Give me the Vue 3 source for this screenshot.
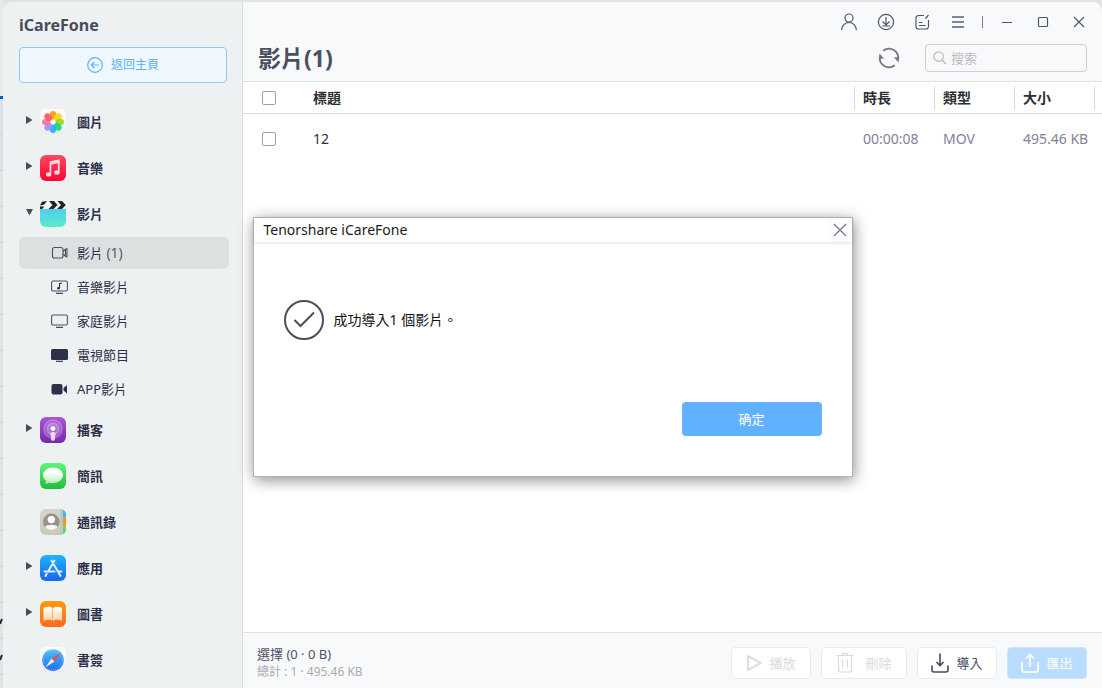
<script setup>
import { ref } from 'vue'

const groups = [
  { id: 'photos', label: '圖片', arrow: 'right' },
  { id: 'music', label: '音樂', arrow: 'right' },
  {
    id: 'videos',
    label: '影片',
    arrow: 'down',
    children: [
      { id: 'video', label: '影片', count: '(1)', active: true },
      { id: 'mv', label: '音樂影片' },
      { id: 'home', label: '家庭影片' },
      { id: 'tv', label: '電視節目' },
      { id: 'app', label: 'APP影片' }
    ]
  },
  { id: 'podcasts', label: '播客', arrow: 'right' },
  { id: 'messages', label: '簡訊' },
  { id: 'contacts', label: '通訊錄' },
  { id: 'apps', label: '應用', arrow: 'right' },
  { id: 'books', label: '圖書', arrow: 'right' },
  { id: 'bookmarks', label: '書簽' }
]

const petals = [
  ['#ff9a05', 0], ['#ffd20a', 45], ['#9ed60f', 90], ['#10d884', 135],
  ['#1db2f6', 180], ['#a08cff', 225], ['#ff70a4', 270], ['#ff5850', 315]
]

const rows = ref([{ title: '12', duration: '00:00:08', type: 'MOV', size: '495.46 KB', checked: false }])
const allChecked = ref(false)
const query = ref('')
const dialogOpen = ref(true)
</script>

<template>
  <div class="desktop">
    <svg class="behind" width="3" height="688" aria-hidden="true">
      <rect width="3" height="96" fill="#e9eaec" />
      <rect y="96" width="3" height="3" fill="#1559c7" />
      <rect y="99" width="3" height="72" fill="#dcdfe8" />
      <path d="M0 134.500h3M0 170.500h3M0 206.500h3M0 242.500h3M0 278.500h3M0 314.500h3M0 350.500h3M0 386.500h3M0 422.500h3M0 458.500h3M0 494.500h3M0 530.500h3M0 566.500h3M0 602.500h3M0 638.500h3M0 674.500h3" stroke="#cfcfd1" />
      <path d="M0 624l2-5M0 660l2-5" stroke="#1d2742" stroke-width="2" />
    </svg>
    <div class="window">
      <aside class="sidebar">
        <div class="brand">iCareFone</div>
        <button class="back" type="button">
          <svg width="16" height="16" viewBox="0 0 16 16" fill="none" stroke="currentColor" stroke-width="1.200">
            <circle cx="8" cy="8" r="7.300" />
            <path d="M12 8H4.500M7.300 5L4.300 8l3 3" />
          </svg>
          返回主頁
        </button>
        <nav>
          <ul class="groups">
            <li v-for="g in groups" :key="g.id">
              <button class="group" type="button">
                <svg class="arrow" width="7" height="8" viewBox="0 0 7 8" aria-hidden="true">
                  <path v-if="g.arrow === 'right'" d="M0 0L6.500 4 0 8z" fill="#4b4d5e" />
                  <path v-if="g.arrow === 'down'" d="M0 1h7L3.500 7.500z" fill="#4b4d5e" />
                </svg>
                <svg class="tile" width="26" height="26" viewBox="0 0 26 26" aria-hidden="true">
                  <defs>
                    <linearGradient :id="'g-' + g.id" x1="0" y1="0" x2="0" y2="1">
                      <template v-if="g.id === 'music'"><stop offset="0" stop-color="#fd4863" /><stop offset="1" stop-color="#fb0632" /></template>
                      <template v-else-if="g.id === 'videos'"><stop offset="0" stop-color="#4fcdf0" /><stop offset="1" stop-color="#58edc8" /></template>
                      <template v-else-if="g.id === 'podcasts'"><stop offset="0" stop-color="#ab55d8" /><stop offset="1" stop-color="#7529ab" /></template>
                      <template v-else-if="g.id === 'messages'"><stop offset="0" stop-color="#5df575" /><stop offset="1" stop-color="#22bd3c" /></template>
                      <template v-else-if="g.id === 'contacts'"><stop offset="0" stop-color="#d7d5ca" /><stop offset="1" stop-color="#c9c8ba" /></template>
                      <template v-else-if="g.id === 'apps'"><stop offset="0" stop-color="#1fb6fb" /><stop offset="1" stop-color="#1c63ee" /></template>
                      <template v-else-if="g.id === 'books'"><stop offset="0" stop-color="#ff9b08" /><stop offset="1" stop-color="#fb6a20" /></template>
                      <template v-else><stop offset="0" stop-color="#ffffff" /><stop offset="1" stop-color="#ececee" /></template>
                    </linearGradient>
                    <linearGradient v-if="g.id === 'messages'" id="bubble" x1="0" y1="0" x2="0" y2="1"><stop offset="0.300" stop-color="#fff" /><stop offset="1" stop-color="#b4ecbb" /></linearGradient>
                    <linearGradient v-if="g.id === 'books'" id="page" x1="0" y1="0" x2="0" y2="1"><stop offset="0" stop-color="#fff" /><stop offset="1" stop-color="#ffd0a8" /></linearGradient>
                    <linearGradient v-if="g.id === 'bookmarks'" id="dial" x1="0" y1="0" x2="0" y2="1"><stop offset="0" stop-color="#4cc3f7" /><stop offset="1" stop-color="#1e6bf2" /></linearGradient>
                  </defs>
                  <path v-if="g.id === 'videos'" d="M0 8h26v12a6 6 0 0 1-6 6H6a6 6 0 0 1-6-6z" fill="url(#g-videos)" />
                  <rect v-else width="26" height="26" rx="6" :fill="`url(#g-${g.id})`" />

                  <g v-if="g.id === 'photos'">
                    <ellipse v-for="p in petals" :key="p[1]" cx="13" cy="6.200" rx="3.300" ry="4.200" :fill="p[0]" fill-opacity="0.920" :transform="`rotate(${p[1]} 13 13)`" />
                    <circle cx="13" cy="13" r="1.900" fill="#fff" fill-opacity="0.850" />
                  </g>
                  <g v-else-if="g.id === 'music'" fill="#ffd9df">
                    <path d="M9.600 6.500l10-2.300v3.600l-8.300 1.900v9.500H9.600z" />
                    <path d="M17.900 6h1.700v11.500h-1.700z" />
                    <ellipse cx="8.600" cy="19.400" rx="2.700" ry="2.200" />
                    <ellipse cx="16.900" cy="17.400" rx="2.700" ry="2.200" />
                  </g>
                  <g v-else-if="g.id === 'videos'">
                    <path d="M0.500 3L3 .3h20l3 2.700v5H0z" fill="#f3f3f2" />
                    <path d="M0 4.500L2 .8l5-.8-3 3.700zM9 0h5l3.500 4-4 4H8.500l4-4zM17.500 0h4.500l3.800 4-3.800 4h-5l4-4zM0 5.500h4.500L2 8H0z" fill="#202225" />
                  </g>
                  <g v-else-if="g.id === 'podcasts'" fill="none" stroke="#e4bdf8">
                    <circle cx="13" cy="12" r="9" stroke-width="1.600" stroke-opacity="0.350" fill="#fff" fill-opacity="0.140" />
                    <circle cx="13" cy="12" r="5.800" stroke-width="1.600" stroke-opacity="0.400" fill="#fff" fill-opacity="0.180" />
                    <circle cx="13" cy="11.600" r="2.400" fill="#fff" stroke="none" />
                    <path d="M10.400 16.500c0-2 5.200-2 5.200 0l-.8 6c-.3 1.700-3.300 1.700-3.600 0z" fill="#eed6fa" stroke="none" />
                  </g>
                  <path v-else-if="g.id === 'messages'" d="M13 4.500c5.600 0 10 3.400 10 7.800S18.600 20 13 20c-1.400 0-2.700-.2-3.800-.6-1.200.9-2.600 1.300-4.200 1.200.8-.8 1.200-1.600 1.300-2.700C4.200 16.500 3 14.500 3 12.300 3 7.900 7.400 4.500 13 4.500z" fill="url(#bubble)" />
                  <g v-else-if="g.id === 'contacts'">
                    <path d="M20 0a6 6 0 0 1 3 .8v24.400a6 6 0 0 1-3 .8z" fill="#bcc9c0" />
                    <path d="M23 .8a6 6 0 0 1 3 5.200v2.500h-3z" fill="#38b6f7" />
                    <path d="M23 8.500h3v8.500h-3z" fill="#ff9318" />
                    <path d="M23 17.500h3V20a6 6 0 0 1-3 5.200z" fill="#5cd865" />
                    <circle cx="11.300" cy="12.800" r="8.300" fill="#979388" />
                    <circle cx="11.300" cy="10.600" r="3.700" fill="#fff" />
                    <path d="M5 18c1.300-3 11.300-3 12.600 0-2.600 4-10 4-12.600 0z" fill="#f6f6f2" />
                  </g>
                  <g v-else-if="g.id === 'apps'" stroke="#dcefff" stroke-width="2" stroke-linecap="round" fill="none">
                    <path d="M14.500 5.500l-6.300 10.800M6.700 18.800L5.500 21M11.500 5.500L20.500 21M4.500 16.500h10M18.500 16.500h3" />
                  </g>
                  <g v-else-if="g.id === 'books'" fill="url(#page)">
                    <path d="M3.500 7c3-1.700 7-1.600 9 .2V20c-2-1.500-6-1.600-9 0zM13 7.200c2-1.800 6-1.900 9-.2v13c-3-1.600-7-1.500-9 0z" />
                  </g>
                  <g v-else-if="g.id === 'bookmarks'">
                    <circle cx="13" cy="13" r="10.800" fill="url(#dial)" />
                    <circle cx="13" cy="13" r="9.500" fill="none" stroke="#b9e2ff" stroke-width="0.800" stroke-dasharray="0.600 1.400" />
                    <path d="M20.500 5.800L11.600 11.600l2.800 2.800z" fill="#f5453c" />
                    <path d="M5.500 20.300l6.100-8.700 2.800 2.800z" fill="#f3f6fa" />
                  </g>
                </svg>
                <span>{{ g.label }}</span>
              </button>
              <ul v-if="g.children" class="subs">
                <li v-for="c in g.children" :key="c.id">
                  <button class="sub" :class="{ active: c.active }" type="button">
                    <svg width="17" height="14" viewBox="0 0 17 14" fill="none" stroke="#4c5064" stroke-width="1.100" aria-hidden="true">
                      <template v-if="c.id === 'video'">
                        <rect x="1.500" y="1.500" width="10.500" height="10.500" rx="2" />
                        <path d="M12 5.500l3-2.800h1v8.100h-1l-3-2.800M14.500 3v7.500" />
                      </template>
                      <template v-else-if="c.id === 'mv'">
                        <rect x="0.600" y="1" width="15.800" height="10" rx="1.500" />
                        <path d="M5 13.300h7" stroke="#2c3048" />
                        <path d="M8.500 8V3.500l2.500-.3" stroke="#2c3048" />
                        <circle cx="7.500" cy="8.200" r="1.300" fill="#2c3048" stroke="none" />
                      </template>
                      <template v-else-if="c.id === 'home'">
                        <rect x="0.600" y="1" width="15.800" height="10" rx="1.500" />
                        <path d="M5 13.300h7" stroke="#2c3048" />
                      </template>
                      <template v-else-if="c.id === 'tv'">
                        <rect y="1" width="17" height="11" rx="1.500" fill="#2c3048" stroke="none" />
                        <path d="M5 13.300h7" stroke="#2c3048" />
                      </template>
                      <g v-else fill="#2c3048" stroke="none">
                        <rect x="0.500" y="2" width="11" height="10.500" rx="2" />
                        <path d="M12.500 6L16 3v8.500l-3.500-3z" />
                      </g>
                    </svg>
                    <span>{{ c.label }} <span v-if="c.count" class="count">{{ c.count }}</span></span>
                  </button>
                </li>
              </ul>
            </li>
          </ul>
        </nav>
      </aside>

      <main class="main">
        <header class="header">
          <div class="controls">
            <button type="button" aria-label="帳戶">
              <svg width="18" height="18" viewBox="0 0 18 18"><circle cx="8" cy="5" r="4" /><path d="M.6 17c.3-4.500 3.400-7.500 7.400-7.500s7.100 3 7.400 7.500" /></svg>
            </button>
            <button type="button" aria-label="下載">
              <svg width="18" height="18" viewBox="0 0 18 18"><circle cx="9" cy="9" r="7.600" /><path d="M9 4v7.500M5.500 8.500L9 12l3.500-3.500M5 13h8" /></svg>
            </button>
            <button type="button" aria-label="回饋">
              <svg width="18" height="18" viewBox="0 0 18 18"><path d="M11 2.500H5.500A2.500 2.500 0 0 0 3 5v8.500A2.500 2.500 0 0 0 5.500 16h7.500a2.500 2.500 0 0 0 2.500-2.500V7M12.500 5.500l3-3.500M6 9.500h3.500M6 12.500h6.500" /></svg>
            </button>
            <button type="button" aria-label="選單">
              <svg width="18" height="18" viewBox="0 0 18 18"><path d="M3 4h12M3 9h12M3 14h12" class="thick" /></svg>
            </button>
            <span class="bar"></span>
            <button type="button" aria-label="最小化">
              <svg width="18" height="18" viewBox="0 0 18 18"><path d="M4 9.500h10" /></svg>
            </button>
            <button type="button" aria-label="最大化">
              <svg width="18" height="18" viewBox="0 0 18 18"><rect x="4.500" y="4.500" width="9" height="9" rx="1" /></svg>
            </button>
            <button type="button" aria-label="關閉">
              <svg width="18" height="18" viewBox="0 0 18 18"><path d="M4 4l10 10M14 4L4 14" /></svg>
            </button>
          </div>
          <div class="heading">
            <h1>影片(1)</h1>
            <button class="refresh" type="button" aria-label="重新整理">
              <svg width="22" height="22" viewBox="0 0 22 22" fill="none" stroke="#767883" stroke-width="1.900">
                <path d="M5.200 3.800A9.200 9.200 0 0 1 20.200 11.500M16.800 18.200A9.200 9.200 0 0 1 1.800 10.500" />
                <path d="M16 10.500l5.200-.3-.7 5.300zM6 11.500l-5.200.3.700-5.300z" fill="#767883" stroke="none" />
              </svg>
            </button>
            <label class="search">
              <svg width="14" height="14" viewBox="0 0 14 14" fill="none" stroke="#b9bbbe" stroke-width="1.200" aria-hidden="true"><circle cx="5.600" cy="5.600" r="4.700" /><path d="M9 9l4 4" stroke-width="1.700" /></svg>
              <input v-model="query" type="text" placeholder="搜索" aria-label="搜索" />
            </label>
          </div>
        </header>

        <section class="content">
          <table>
            <colgroup><col class="c-check" /><col /><col class="c-data" /><col class="c-data" /><col class="c-data" /><col class="c-end" /></colgroup>
            <thead>
              <tr>
                <th class="check"><input v-model="allChecked" type="checkbox" aria-label="全選" /></th>
                <th>標題</th>
                <th class="tick">時長</th>
                <th class="tick">類型</th>
                <th class="tick">大小</th>
                <th class="tick"></th>
              </tr>
            </thead>
            <tbody>
              <tr v-for="r in rows" :key="r.title">
                <td class="check"><input v-model="r.checked" type="checkbox" aria-label="選擇 12" /></td>
                <td class="name">{{ r.title }}</td>
                <td class="data">{{ r.duration }}</td>
                <td class="data">{{ r.type }}</td>
                <td class="data">{{ r.size }}</td>
                <td></td>
              </tr>
            </tbody>
          </table>
        </section>

        <footer class="footer">
          <div class="summary">
            <div class="selected">選擇 (0 · 0 B)</div>
            <div class="total">總計 : 1 · 495.46 KB</div>
          </div>
          <button class="act off" type="button" disabled>
            <svg width="16" height="18" viewBox="0 0 16 18"><path d="M2 2l12.500 7L2 16z" stroke-width="1.800" /></svg>
            播放
          </button>
          <button class="act wide off" type="button" disabled>
            <svg width="18" height="20" viewBox="0 0 18 20"><path d="M.5 2.500h17M6.500 2V.700h5V2M2.500 2.500v14.500a2 2 0 0 0 2 2h9a2 2 0 0 0 2-2V2.500M6.500 6.500v8M11.500 6.500v8" stroke-width="1.200" /></svg>
            刪除
          </button>
          <button class="act" type="button">
            <svg width="18" height="20" viewBox="0 0 18 20"><path d="M9 .5v12M5.500 9l3.500 3.500L12.500 9M1 12.500v4.500a2 2 0 0 0 2 2h12a2 2 0 0 0 2-2v-4.500" stroke-width="1.600" /></svg>
            導入
          </button>
          <button class="act primary" type="button" disabled>
            <svg width="18" height="20" viewBox="0 0 18 20"><path d="M9 14V1.500M5 5.500l4-4 4 4M1 9v8a2 2 0 0 0 2 2h12a2 2 0 0 0 2-2V9" stroke-width="1.600" /></svg>
            匯出
          </button>
        </footer>
      </main>

      <div v-if="dialogOpen" class="overlay">
        <section class="dialog" role="dialog" aria-labelledby="dlg-title">
          <header class="dlg-bar">
            <span id="dlg-title">Tenorshare iCareFone</span>
            <button type="button" aria-label="關閉" @click="dialogOpen = false">
              <svg width="14" height="14" viewBox="0 0 14 14"><path d="M1 1l12 12M13 1L1 13" stroke="#77778a" stroke-width="1.200" /></svg>
            </button>
          </header>
          <div class="dlg-body">
            <svg width="40" height="40" viewBox="0 0 40 40" fill="none" stroke="#4e4e52" stroke-width="2" aria-hidden="true">
              <circle cx="20" cy="20" r="19" />
              <path d="M10.500 20l6 6L30 12.500" />
            </svg>
            <p>成功導入1 個影片。</p>
          </div>
          <div class="dlg-foot">
            <button type="button" @click="dialogOpen = false">确定</button>
          </div>
        </section>
      </div>
    </div>
  </div>
</template>

<style>
body {
  margin: 0;
  background: #d9dadc;
}
</style>

<style scoped>
* { box-sizing: border-box; }
button, input {
  font: inherit;
  color: inherit;
  margin: 0;
}
button {
  padding: 0;
  border: 0;
  background: none;
}
svg { display: block; flex: none; }
ul { list-style: none; margin: 0; padding: 0; }

.desktop {
  position: relative;
  min-height: 100vh;
  display: grid;
  padding: 2px 0 0 3px;
  background: #e2e3e5;
  font: 13px/20px "Noto Sans", "Noto Sans CJK TC", sans-serif;
  color: #2c3048;
}
.behind {
  position: absolute;
  left: 0;
  top: 0;
}
.window {
  position: relative;
  display: grid;
  grid-template-columns: 240px minmax(0, 1fr);
  border-radius: 10px 10px 0 0;
  overflow: hidden;
  background: #fff;
}

.sidebar {
  background: #edf1f2;
  border-right: 1px solid #d3dfde;
  padding: 0 13px 0 16px;
}
.brand {
  padding-top: 2px;
  font-size: 16px;
  font-weight: 700;
  line-height: 43px;
  color: #4a4c5e;
}
.back {
  display: flex;
  align-items: center;
  justify-content: center;
  gap: 8px;
  width: 208px;
  height: 36px;
  margin-bottom: 16px;
  border: 1px solid #91c8fd;
  border-radius: 4px;
  background: #eff7ff;
  color: #5cb0ff;
  font-size: 12px;
}
.group {
  display: flex;
  align-items: center;
  width: 100%;
  height: 46px;
  padding-left: 7px;
  font-weight: 700;
}
.arrow { margin-right: 7px; margin-bottom: 4px; }
.tile { margin-right: 11px; }
.subs {
  display: grid;
  gap: 2px;
  padding-bottom: 2px;
}
.sub {
  display: flex;
  align-items: center;
  gap: 9px;
  width: 100%;
  height: 32px;
  padding-left: 32px;
  border-radius: 6px;
}
.sub.active { background: #dce0e0; }
.count { font-size: 14px; color: #5a5b60; }

.main {
  display: flex;
  flex-direction: column;
  min-width: 0;
}
.header {
  height: 80px;
  background: #f8f9fb;
  border-bottom: 1px solid #dae3e2;
  padding: 7px 15px 0 15px;
}
.controls {
  display: flex;
  justify-content: flex-end;
  align-items: center;
  gap: 18px;
  height: 26px;
  margin-right: -1px;
}
.controls svg {
  fill: none;
  stroke: #51556a;
  stroke-width: 1.2;
  overflow: visible;
}
.controls .thick { stroke: #80869a; stroke-width: 2; }
.bar {
  width: 1px;
  height: 12px;
  margin: 0 -3px;
  background: #777b8b;
}
.heading {
  display: flex;
  align-items: center;
  height: 46px;
}
h1 {
  flex: 1;
  margin: 0;
  font-size: 23px;
  line-height: 32px;
  font-weight: 700;
  color: #4c4f61;
}
.refresh { margin-right: 25px; }
.search {
  display: flex;
  align-items: center;
  gap: 4px;
  width: 162px;
  height: 28px;
  padding: 0 7px;
  border: 1px solid #cdd0d2;
  border-radius: 4px;
}
.search input {
  flex: 1;
  min-width: 0;
  padding: 0;
  border: 0;
  outline: 0;
  background: none;
}
.search input::placeholder { color: #b9bbbe; opacity: 1; }

.content { flex: 1; }
table {
  width: 100%;
  table-layout: fixed;
  border-collapse: separate;
  border-spacing: 0;
  font-size: 14px;
}
.c-check { width: 70px; }
.c-data { width: 80px; }
.c-end { width: 8px; }
th {
  height: 32px;
  padding: 0;
  text-align: left;
  font-weight: 700;
  color: #2d2e32;
  border-bottom: 1px solid #d9dcdc;
}
th.tick {
  padding-left: 9px;
  background: linear-gradient(#d6dada, #d6dada) 0 4px / 1px 24px no-repeat;
}
td {
  height: 49px;
  padding: 0;
  white-space: nowrap;
}
th.check, td.check { padding-left: 19px; }
td.data { padding-left: 9px; color: #828294; }
td.name { color: #303136; }
input[type="checkbox"] {
  appearance: none;
  display: block;
  width: 14px;
  height: 14px;
  border: 1px solid #a0a1a7;
  border-radius: 2px;
  background: #fff;
}

.footer {
  display: flex;
  align-items: center;
  gap: 10px;
  height: 56px;
  padding: 4px 15px 0 14px;
  border-top: 1px solid #dae3e2;
  background: #f8f9fb;
}
.summary { flex: 1; }
.selected { line-height: 18px; color: #4f5268; }
.total { font-size: 12px; line-height: 18px; color: #a9abae; }
.act {
  display: flex;
  align-items: center;
  justify-content: center;
  gap: 7px;
  width: 80px;
  height: 32px;
  border: 1px solid #e8eaec;
  border-radius: 4px;
  background: #fff;
  color: #46495d;
}
.act.wide { width: 86px; gap: 11px; }
.act.off { color: #d9dadc; }
.act.primary { background: #b9dcff; border-color: #cfe5fb; color: #fff; }
.act svg { fill: none; stroke: currentColor; }

.overlay {
  position: absolute;
  inset: 0;
  display: grid;
  place-items: center;
  padding-top: 4px;
}
.dialog {
  width: 600px;
  border: 1px solid #b4b4b4;
  background: #fff;
  box-shadow: 1px 3px 14px rgba(0, 0, 0, 0.45);
}
.dlg-bar {
  display: flex;
  justify-content: space-between;
  height: 24px;
  padding-left: 10px;
  box-shadow: 0 1px 4px rgba(0, 0, 0, 0.12);
  font-size: 14px;
  line-height: 24px;
  color: #1b1b1b;
}
.dlg-bar button {
  display: grid;
  place-items: center;
  width: 24px;
  background: #fcfcfc;
}
.dlg-body {
  display: flex;
  align-items: center;
  gap: 10px;
  padding: 58px 30px 62px;
  font-size: 14px;
  color: #111;
}
.dlg-body p { margin: 0; }
.dlg-foot {
  display: flex;
  justify-content: flex-end;
  padding: 0 30px 40px;
}
.dlg-foot button {
  width: 140px;
  height: 34px;
  border-radius: 4px;
  background: #60b1ff;
  color: #fff;
}
</style>
